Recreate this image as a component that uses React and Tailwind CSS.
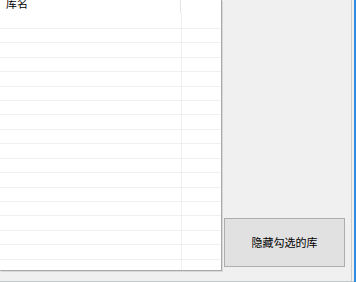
const rowHeights = [16, 14, 15, 14, 15, 14, 14, 15, 14, 15, 14, 15, 14, 14, 15, 14, 15]

export default function App() {
  return (
    <div className="flex h-[282px] w-[356px] flex-col overflow-hidden bg-[#f0f0f0] text-black" style={{ fontFamily: '"Noto Sans CJK SC", "Noto Sans", sans-serif' }}>
      <div className="flex h-[281px]">
        {/* list view */}
        <div className="h-[271px] w-[222px] shrink-0 overflow-hidden border-r border-b border-[#a9a9a9] bg-white shadow-[1px_1px_0_#d9d9d9]">
          <div className="flex h-[13px] overflow-hidden">
            <div className="w-[181px] border-r border-[#e5e5e5] pl-[6px]">
              <span className="mt-[-2px] block text-[11px] leading-none">库名</span>
            </div>
          </div>
          {rowHeights.map((h, i) => (
            <div key={i} className="flex border-b border-[#f0f0f0]" style={{ height: h }}>
              <div className="w-[182px] border-r border-[#f0f0f0]" />
            </div>
          ))}
          <div className="flex h-[12px]">
            <div className="w-[182px] border-r border-[#f0f0f0]" />
          </div>
        </div>

        {/* action area */}
        <div className="flex flex-1 flex-col justify-end pb-[14px] pl-[2px]">
          <button type="button" className="flex h-[49px] w-[121px] items-center justify-center border border-[#adadad] bg-[#e1e1e1] text-[11px] leading-none">
            隐藏勾选的库
          </button>
        </div>

        {/* window edge */}
        <div className="w-px bg-[#cdcdcd]" />
        <div className="w-[2px]" />
        <div className="w-[2px] bg-[#2b8ce0]" />
      </div>
      <div className="flex h-px">
        <div className="flex-1 bg-[#c3c7cb]" />
        <div className="w-[2px] bg-[#2b8ce0]" />
      </div>
    </div>
  )
}
